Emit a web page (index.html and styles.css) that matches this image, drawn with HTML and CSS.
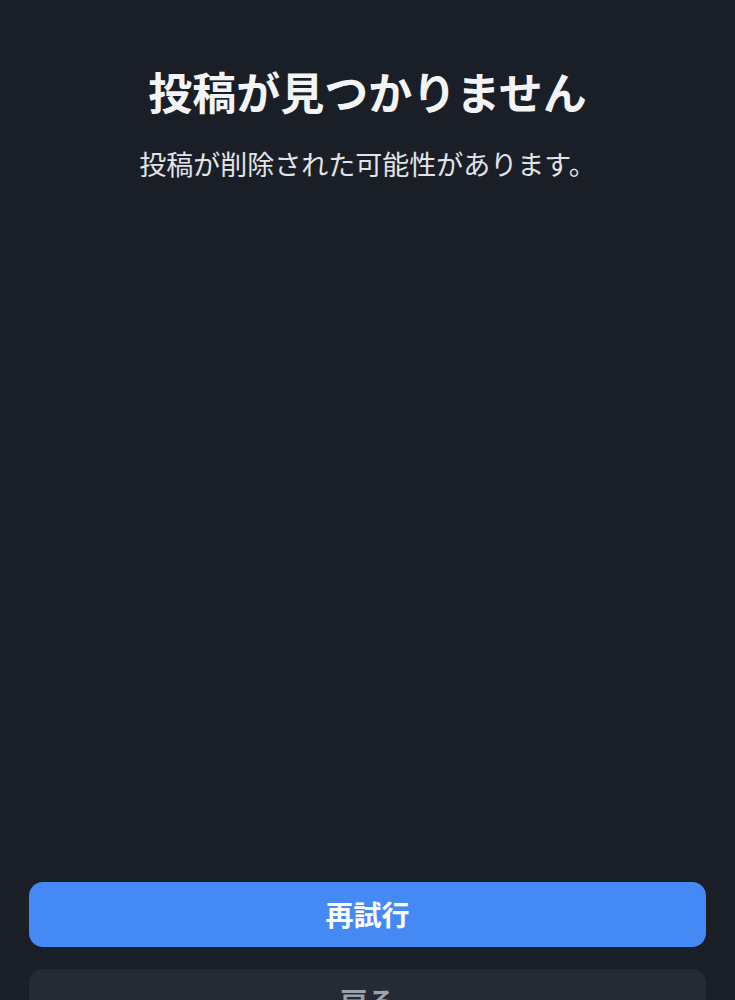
FILE: index.html
```html
<!DOCTYPE html>
<html lang="ja">

<head>
    <meta charset="UTF-8" />
    <meta name="viewport" content="width=device-width, initial-scale=1.0">
    <title>投稿が見つかりません</title>
    <link rel="stylesheet" href="styles.css">
</head>

<body>
    <div class="page">
        <div class="message">
            <h1 class="title">投稿が見つかりません</h1>
            <p class="subtitle">投稿が削除された可能性があります。</p>
        </div>

        <div class="actions">
            <button class="btn btn-primary">再試行</button>
            <button class="btn btn-secondary">戻る</button>
        </div>
    </div>
</body>

</html>
```

FILE: styles.css
```css
html,
body {
    margin: 0;
    background-color: #1a1f27;
}

body {
    font-family: "Noto Sans CJK JP", "Noto Sans", sans-serif;
    color: #f3f4f6;
}

.page {
    display: flex;
    flex-direction: column;
    padding: 0 29px 40px;
}

.message {
    text-align: center;
    padding-top: 63px;
}

.title {
    margin: 0;
    font-size: 44px;
    font-weight: 700;
    line-height: 1.3;
}

.subtitle {
    margin: 25px 0 0;
    font-size: 27px;
    line-height: 1.4;
    color: #e2e4e8;
}

.actions {
    display: flex;
    flex-direction: column;
    gap: 22px;
    margin-top: 699px;
}

.btn {
    height: 65px;
    border: none;
    border-radius: 14px;
    font-family: inherit;
    font-size: 28px;
    font-weight: 700;
}

.btn-primary {
    background-color: #4589f5;
    color: #ffffff;
}

.btn-secondary {
    background-color: #252a35;
    color: #9ca3af;
}
```
